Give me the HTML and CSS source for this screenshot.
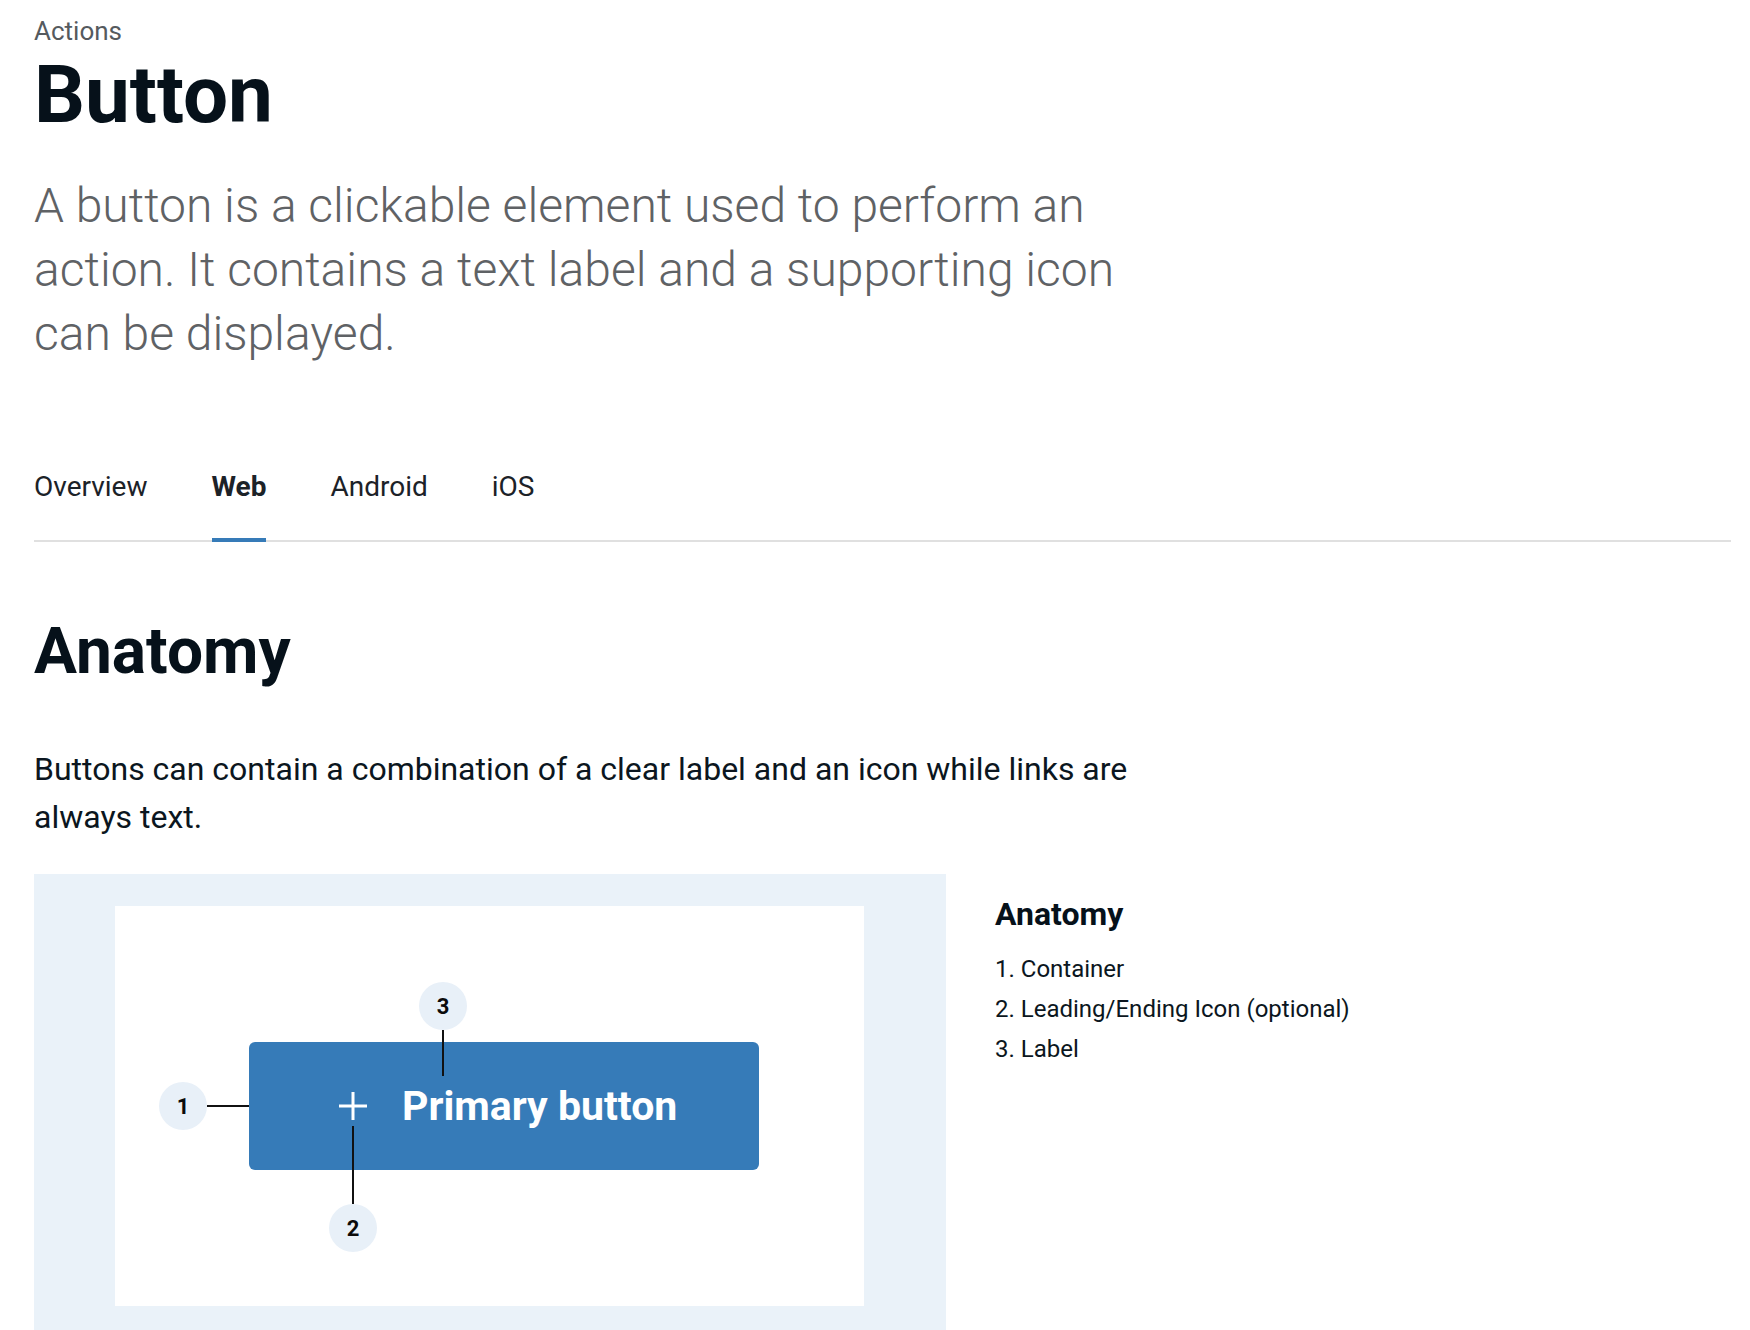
FILE: index.html
```html
<!DOCTYPE html>
<html lang="en">
<head>
<meta charset="utf-8">
<title>Button</title>
<link rel="stylesheet" href="styles.css">
</head>
<body>
<main class="page">
  <header class="page-header">
    <div class="eyebrow">Actions</div>
    <h1 class="title">Button</h1>
    <p class="lead">A button is a clickable element used to perform an action. It contains a text label and a supporting icon can be displayed.</p>
  </header>

  <nav class="tabs">
    <a class="tab">Overview</a>
    <a class="tab tab-active">Web</a>
    <a class="tab">Android</a>
    <a class="tab">iOS</a>
  </nav>

  <section class="section">
    <h2 class="section-title">Anatomy</h2>
    <p class="section-text">Buttons can contain a combination of a clear label and an icon while links are always text.</p>

    <div class="anatomy">
      <div class="stage">
        <div class="canvas">
          <div class="demo-btn">
            <svg class="plus" width="30" height="30" viewBox="0 0 30 30" aria-hidden="true">
              <path d="M15 1V29M1 15H29" stroke="#ffffff" stroke-width="3" fill="none"/>
            </svg>
            <span class="demo-label">Primary button</span>

            <span class="leader leader-1"></span>
            <span class="leader leader-2"></span>
            <span class="leader leader-3"></span>
            <span class="pin pin-1">1</span>
            <span class="pin pin-2">2</span>
            <span class="pin pin-3">3</span>
          </div>
        </div>
      </div>

      <aside class="legend">
        <h3 class="legend-title">Anatomy</h3>
        <ol class="legend-list">
          <li>1. Container</li>
          <li>2. Leading/Ending Icon (optional)</li>
          <li>3. Label</li>
        </ol>
      </aside>
    </div>
  </section>
</main>
</body>
</html>
```

FILE: styles.css
```css
html, body {
  margin: 0;
  padding: 0;
  background: #ffffff;
}

body {
  font-family: Roboto, "Noto Sans", "Liberation Sans", sans-serif;
  color: #0b1620;
}

.page {
  padding: 17px 19px 0 34px;
}

.page-header {
  display: flex;
  flex-direction: column;
}

.eyebrow {
  font-size: 26px;
  line-height: 28px;
  color: #555a5e;
}

.title {
  margin: 10px 0 0 0;
  font-size: 80px;
  line-height: 80px;
  font-weight: 700;
  color: #06111a;
}

.lead {
  margin: 39px 0 0 0;
  max-width: 1140px;
  font-size: 48px;
  line-height: 64px;
  font-weight: 300;
  color: #5f6265;
}

.tabs {
  display: flex;
  gap: 64px;
  margin-top: 104px;
  border-bottom: 2px solid #e0e0e0;
}

.tab {
  display: block;
  font-size: 28px;
  line-height: 33px;
  color: #1c2228;
  padding-bottom: 35px;
  margin-bottom: -2px;
  border-bottom: 4px solid transparent;
}

.tab-active {
  font-weight: 700;
  border-bottom-color: #367bb8;
}

.section {
  display: flex;
  flex-direction: column;
}

.section-title {
  margin: 71px 0 0 0;
  font-size: 64px;
  line-height: 77px;
  font-weight: 700;
  color: #06111a;
}

.section-text {
  margin: 55px 0 0 0;
  max-width: 1140px;
  font-size: 32px;
  line-height: 48px;
  color: #0b1620;
}

.anatomy {
  display: flex;
  align-items: flex-start;
  gap: 49px;
  margin-top: 33px;
}

.stage {
  width: 912px;
  flex: none;
  background: #eaf2f9;
  padding: 32px 82px 32px 81px;
  box-sizing: border-box;
}

.canvas {
  background: #ffffff;
  height: 400px;
  display: flex;
  align-items: center;
  padding-left: 134px;
  box-sizing: border-box;
}

.demo-btn {
  position: relative;
  width: 510px;
  height: 128px;
  box-sizing: border-box;
  background: #367bb8;
  border-radius: 6px;
  display: flex;
  align-items: center;
  padding-left: 89px;
  gap: 34px;
}

.plus {
  display: block;
  flex: none;
}

.demo-label {
  font-size: 41px;
  line-height: 48px;
  font-weight: 700;
  color: #ffffff;
  white-space: nowrap;
}

.pin {
  position: absolute;
  width: 48px;
  height: 48px;
  border-radius: 50%;
  background: #e8f0f8;
  display: flex;
  align-items: center;
  justify-content: center;
  font-size: 22px;
  font-weight: 700;
  color: #0b0b0b;
}

.pin-1 { left: -90px; top: 40px; }
.pin-2 { left: 80px; top: 162px; }
.pin-3 { left: 170px; top: -60px; }

.leader {
  position: absolute;
  background: #111111;
}

.leader-1 { left: -42px; top: 63px; width: 42px; height: 2px; }
.leader-2 { left: 103px; top: 84px; width: 2px; height: 78px; }
.leader-3 { left: 193px; top: -12px; width: 2px; height: 46px; }

.legend {
  margin-top: 21px;
}

.legend-title {
  margin: 0;
  font-size: 32px;
  line-height: 38px;
  font-weight: 700;
  color: #06111a;
}

.legend-list {
  list-style: none;
  margin: 16px 0 0 0;
  padding: 0;
  font-size: 24px;
  line-height: 40px;
  color: #0b1620;
}
```
